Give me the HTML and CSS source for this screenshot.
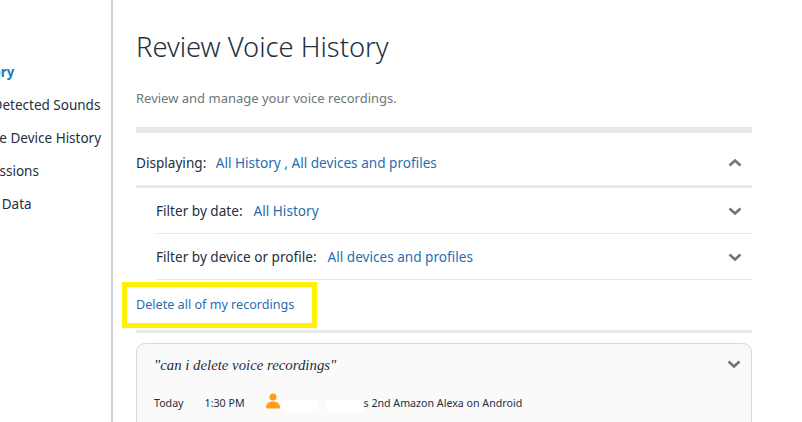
FILE: index.html
```html
<!DOCTYPE html>
<html lang="en">
<head>
<meta charset="utf-8">
<title>Review Voice History</title>
<link rel="stylesheet" href="styles.css">
</head>
<body>
<div class="page">
  <nav class="sidebar">
    <ul class="side-list">
      <li class="side-item active">Voice History</li>
      <li class="side-item">Review all Detected Sounds</li>
      <li class="side-item">Smart Home Device History</li>
      <li class="side-item">Skills Permissions</li>
      <li class="side-item">Alexa Voice Data</li>
    </ul>
  </nav>
  <main class="main">
    <h1 class="title">Review Voice History</h1>
    <p class="subtitle">Review and manage your voice recordings.</p>
    <div class="bar"></div>
    <div class="row display-row">
      <span class="label">Displaying:</span>
      <a class="link">All History , All devices and profiles</a>
      <svg class="chev" viewBox="0 0 14 10"><path d="M1.5 7.5 7 2.5l5.5 5"/></svg>
    </div>
    <div class="bar thin"></div>
    <div class="filters">
      <div class="row filter-row">
        <span class="label">Filter by date:</span>
        <a class="link">All History</a>
        <svg class="chev" viewBox="0 0 14 10"><path d="M1.5 2.5 7 7.5l5.5-5"/></svg>
      </div>
      <div class="row filter-row">
        <span class="label">Filter by device or profile:</span>
        <a class="link">All devices and profiles</a>
        <svg class="chev" viewBox="0 0 14 10"><path d="M1.5 2.5 7 7.5l5.5-5"/></svg>
      </div>
    </div>
    <div class="delete-row">
      <a class="delete-link">Delete all of my recordings</a>
      <span class="highlight"></span>
    </div>
    <div class="bar thin"></div>
    <article class="card">
      <div class="card-head">
        <span class="quote">"can i delete voice recordings"</span>
        <svg class="chev card-chev" viewBox="0 0 14 10"><path d="M1.5 2.5 7 7.5l5.5-5"/></svg>
      </div>
      <div class="meta">
        <span class="date">Today</span>
        <span class="time">1:30 PM</span>
        <svg class="person" viewBox="0 0 14 16"><circle cx="7" cy="4" r="3.6"/><path d="M0 14.6C0 10.6 3 8.6 7 8.6s7 2 7 6c0 .6-.4 1-1 1H1c-.6 0-1-.4-1-1z"/></svg>
        <span class="redact first"></span>
        <span class="redact second"></span>
        <span class="device">s 2nd Amazon Alexa on Android</span>
      </div>
    </article>
  </main>
</div>
</body>
</html>
```
FILE: styles.css
```css
* { box-sizing: border-box; }
html, body { margin: 0; padding: 0; background: #fff; }
body { font-family: "Noto Sans", "Liberation Sans", sans-serif; color: #232f3e; font-size: 13.6px; }
.page { display: flex; width: 802px; height: 422px; overflow: hidden; }
.sidebar { flex: 0 0 113px; height: 100%; border-right: 2px solid #d0d3d3; overflow: hidden; padding-top: 56px; font-size: 13.5px; }
.side-list { list-style: none; margin: 0 0 0 -73px; padding: 0; width: 240px; }
.side-item { height: 33px; line-height: 33px; white-space: nowrap; }
.side-item.active { color: #1f78b8; font-weight: 700; font-size: 13.3px; }
.main { flex: 0 0 616px; margin-left: 23px; }
.title { margin: 28px 0 0; font-size: 27.3px; line-height: 38px; font-weight: 300; color: #232f3e; }
.subtitle { margin: 22px 0 0; line-height: 20px; font-size: 13px; color: #6c7778; }
.bar { height: 6px; margin-top: 19px; background: #e7e9e9; }
.bar.thin { height: 3px; margin-top: 0; }
.row { display: flex; align-items: center; }
.display-row { height: 52px; padding-top: 6px; }
.label { color: #232f3e; }
.link, .delete-link { color: #1f6fb0; }
.link { margin-left: 11px; }
.display-row .link { margin-left: 9.5px; }
.chev { width: 14px; height: 10px; margin-left: auto; margin-right: 10px; fill: none; stroke: #6c7778; stroke-width: 2.6; }
.display-row .chev { margin-top: 2px; }
.filters { margin-left: 20px; }
.filter-row { height: 46px; border-bottom: 1px solid #e7e9e9; }
.delete-row { position: relative; height: 50px; display: flex; align-items: center; padding-bottom: 2px; }
.delete-link { font-size: 12.6px; }
.highlight { position: absolute; left: -14px; top: 2px; width: 195px; height: 46px; border: 5px solid #fff200; }
.card { margin-top: 10px; height: 110px; border: 1px solid #d5d9d9; border-radius: 9px; background: #fafafa; padding: 0 0 0 17px; }
.card-head { display: flex; align-items: center; height: 42px; }
.quote { font-family: "Liberation Serif", serif; font-style: italic; font-size: 14.8px; color: #232f3e; }
.card-chev { margin-right: 10px; margin-top: -2px; }
.meta { display: flex; align-items: center; height: 26px; margin-top: 4px; font-size: 10.65px; }
.time { margin-left: 21px; }
.person { width: 14px; height: 16px; margin-left: 21px; margin-top: -5px; fill: #ff9e1b; }
.redact { height: 12px; background: #fff; margin-top: 5px; }
.redact.first { width: 37px; margin-left: 2px; }
.redact.second { width: 36px; margin-left: 8px; }
.device { margin-left: 1px; }
```
